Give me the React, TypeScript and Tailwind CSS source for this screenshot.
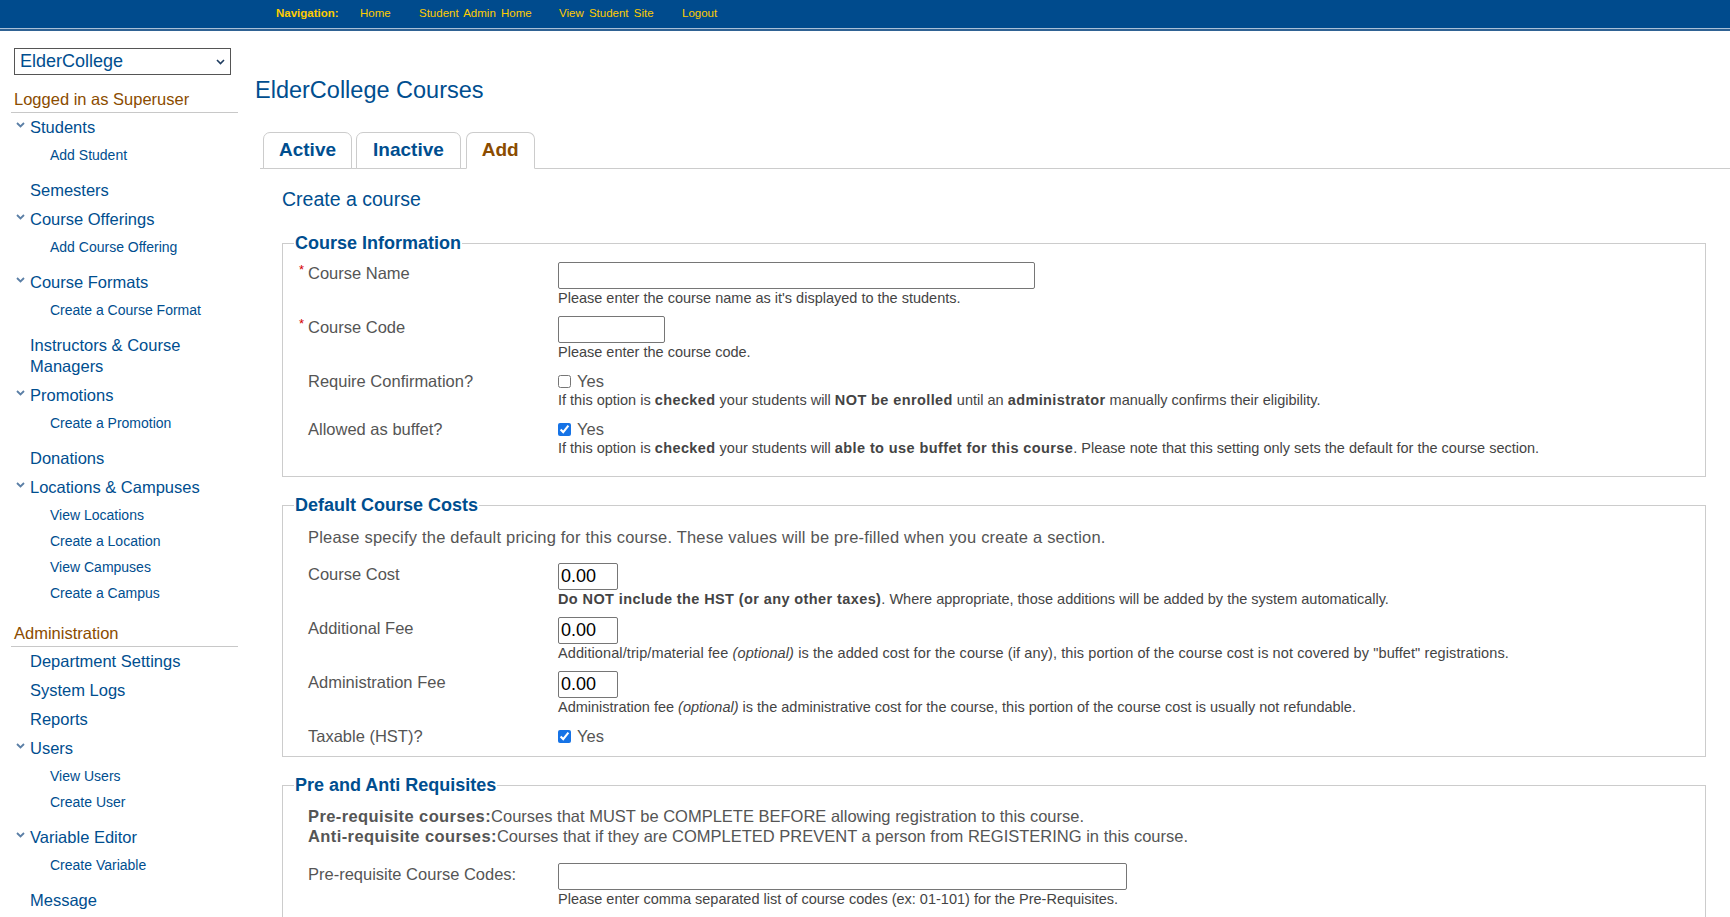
import React from "react";

const BLUE = "text-[#004e8f]";

const Chevron = () => (
  <svg width="9" height="6" viewBox="0 0 9 6" className="absolute left-[5px] top-[9px]">
    <polyline points="1,1 4.5,4.5 8,1" fill="none" stroke="#5b7fa6" strokeWidth="1.8" />
  </svg>
);

type NavItem = { label: string; lines?: string[]; children?: string[]; chevron?: boolean };

const mainNav: NavItem[] = [
  { label: "Students", chevron: true, children: ["Add Student"] },
  { label: "Semesters" },
  { label: "Course Offerings", chevron: true, children: ["Add Course Offering"] },
  { label: "Course Formats", chevron: true, children: ["Create a Course Format"] },
  { label: "Instructors & Course Managers", lines: ["Instructors & Course", "Managers"] },
  { label: "Promotions", chevron: true, children: ["Create a Promotion"] },
  { label: "Donations" },
  {
    label: "Locations & Campuses",
    chevron: true,
    children: ["View Locations", "Create a Location", "View Campuses", "Create a Campus"],
  },
];

const adminNav: NavItem[] = [
  { label: "Department Settings" },
  { label: "System Logs" },
  { label: "Reports" },
  { label: "Users", chevron: true, children: ["View Users", "Create User"] },
  { label: "Variable Editor", chevron: true, children: ["Create Variable"] },
  { label: "Message" },
];

function NavList({ items }: { items: NavItem[] }) {
  return (
    <ul>
      {items.map((item, i) => {
        const prev = items[i - 1];
        const gap = prev && prev.children ? "mt-[8px]" : "";
        return (
          <li key={item.label} className={gap}>
            <div className={`relative pl-[19px] py-[4px] text-[16.5px] leading-[21px] ${BLUE}`}>
              {item.chevron && <Chevron />}
              {item.lines ? item.lines.map((l) => <div key={l}>{l}</div>) : item.label}
            </div>
            {item.children && (
              <ul>
                {item.children.map((c) => (
                  <li key={c} className={`pl-[39px] h-[26px] flex items-center text-[14px] ${BLUE}`}>
                    {c}
                  </li>
                ))}
              </ul>
            )}
          </li>
        );
      })}
    </ul>
  );
}

function Sidebar() {
  return (
    <aside className="w-[238px] shrink-0 pl-[11px] pt-[17px]">
      <div className="relative ml-[3px] w-[217px] h-[27px] border border-[#555] flex items-center pl-[5px]">
        <span className={`text-[18px] ${BLUE}`}>ElderCollege</span>
        <svg width="9" height="6" viewBox="0 0 9 6" className="absolute right-[5px] top-[10px]">
          <polyline points="1,1 4.5,4.5 8,1" fill="none" stroke="#1f3d60" strokeWidth="1.6" />
        </svg>
      </div>
      <div className="mt-[13px] pl-[3px] pb-[2px] border-b border-[#c8c8c8] text-[16.5px] leading-[22px] text-[#8b4c00]">
        Logged in as Superuser
      </div>
      <NavList items={mainNav} />
      <div className="mt-[16px] pl-[3px] pb-[2px] border-b border-[#c8c8c8] text-[16.5px] leading-[22px] text-[#8b4c00]">
        Administration
      </div>
      <NavList items={adminNav} />
    </aside>
  );
}

function Field({
  label,
  required,
  children,
}: {
  label: string;
  required?: boolean;
  children: React.ReactNode;
}) {
  return (
    <>
      <div className="relative pt-[1px] text-[16.5px] leading-[20px] text-[#555]">
        {required && (
          <span className="absolute -left-[9px] -top-[2px] text-[13px] text-[#d40000]">*</span>
        )}
        {label}
      </div>
      <div>{children}</div>
    </>
  );
}

const Help = ({ children }: { children: React.ReactNode }) => (
  <div className="text-[14.5px] leading-[18px] text-[#444] [&_b]:tracking-[0.4px]">{children}</div>
);

const TextBox = ({ w, value }: { w: string; value?: string }) => (
  <input
    type="text"
    defaultValue={value}
    className={`${w} h-[27px] border border-[#767676] rounded-[2px] px-[2px] text-[18px] text-black outline-none block`}
  />
);

const Check = ({ checked }: { checked?: boolean }) => (
  <label className="flex items-center h-[20px] mt-[1px] text-[16.5px] text-[#555]">
    <input
      type="checkbox"
      defaultChecked={checked}
      className="w-[13px] h-[13px] m-0 accent-[#1673e6]"
    />
    <span className="ml-[6px]">Yes</span>
  </label>
);

function Box({ legend, children }: { legend: string; children: React.ReactNode }) {
  return (
    <fieldset className="border border-[#cccccc] px-[11px]">
      <legend className={`px-[1px] text-[18px] leading-[22px] font-bold ${BLUE}`}>{legend}</legend>
      <div className="pl-[14px]">{children}</div>
    </fieldset>
  );
}

function MainPanel() {
  return (
    <main className="flex-1 pl-[17px] pt-[43px]">
      <h1 className={`text-[23.5px] leading-[32px] ${BLUE}`}>ElderCollege Courses</h1>
      <div className="ml-[5px] mt-[26px] flex items-end border-b border-[#cccccc] pl-[3px] gap-[4px]">
        <div className={`-mb-px h-[37px] px-[15px] flex items-center border border-[#cccccc] rounded-t-[7px] bg-white text-[19px] font-bold ${BLUE}`}>
          Active
        </div>
        <div className={`-mb-px h-[37px] px-[16px] flex items-center border border-[#cccccc] rounded-t-[7px] bg-white text-[19px] font-bold ${BLUE}`}>
          Inactive
        </div>
        <div className="ml-[1px] -mb-px h-[37px] px-[15px] flex items-center border border-[#cccccc] border-b-white rounded-t-[7px] bg-white text-[19px] font-bold text-[#8b4c00]">
          Add
        </div>
      </div>
      <div className="ml-[5px] pl-[22px] pr-[24px]">
        <h2 className={`mt-[17px] text-[19.5px] leading-[26px] ${BLUE}`}>Create a course</h2>
        <div className="mt-[20px]">
          <Box legend="Course Information">
            <div className="grid grid-cols-[250px_1fr] gap-y-[9px] pt-[8px] pb-[19px]">
              <Field label="Course Name" required>
                <TextBox w="w-[477px]" />
                <Help>Please enter the course name as it's displayed to the students.</Help>
              </Field>
              <Field label="Course Code" required>
                <TextBox w="w-[107px]" />
                <Help>Please enter the course code.</Help>
              </Field>
              <Field label="Require Confirmation?">
                <Check />
                <Help>
                  If this option is <b>checked</b> your students will <b>NOT be enrolled</b> until an{" "}
                  <b>administrator</b> manually confirms their eligibility.
                </Help>
              </Field>
              <Field label="Allowed as buffet?">
                <Check checked />
                <Help>
                  If this option is <b>checked</b> your students will <b>able to use buffet for this course</b>.
                  Please note that this setting only sets the default for the course section.
                </Help>
              </Field>
            </div>
          </Box>
        </div>
        <div className="mt-[17px]">
          <Box legend="Default Course Costs">
            <p className="pt-[11px] text-[16.5px] leading-[20px] text-[#555] tracking-[0.2px]">
              Please specify the default pricing for this course. These values will be pre-filled when you
              create a section.
            </p>
            <div className="grid grid-cols-[250px_1fr] gap-y-[9px] mt-[16px] pb-[10px]">
              <Field label="Course Cost">
                <TextBox w="w-[60px]" value="0.00" />
                <Help>
                  <b>Do NOT include the HST (or any other taxes)</b>. Where appropriate, those additions will be
                  added by the system automatically.
                </Help>
              </Field>
              <Field label="Additional Fee">
                <TextBox w="w-[60px]" value="0.00" />
                <Help>
                  <span className="tracking-[0.1px]">
                    Additional/trip/material fee <i>(optional)</i> is the added cost for the course (if any), this
                    portion of the course cost is not covered by "buffet" registrations.
                  </span>
                </Help>
              </Field>
              <Field label="Administration Fee">
                <TextBox w="w-[60px]" value="0.00" />
                <Help>
                  Administration fee <i>(optional)</i> is the administrative cost for the course, this portion
                  of the course cost is usually not refundable.
                </Help>
              </Field>
              <Field label="Taxable (HST)?">
                <Check checked />
              </Field>
            </div>
          </Box>
        </div>
        <div className="mt-[17px]">
          <Box legend="Pre and Anti Requisites">
            <div className="pt-[10px] text-[16.5px] leading-[20px] text-[#555] [&_b]:tracking-[0.4px]">
              <div>
                <b>Pre-requisite courses:</b>Courses that MUST be COMPLETE BEFORE allowing registration to this
                course.
              </div>
              <div>
                <b>Anti-requisite courses:</b>Courses that if they are COMPLETED PREVENT a person from
                REGISTERING in this course.
              </div>
            </div>
            <div className="grid grid-cols-[250px_1fr] mt-[17px] pb-[20px]">
              <Field label="Pre-requisite Course Codes:">
                <TextBox w="w-[569px]" />
                <Help>Please enter comma separated list of course codes (ex: 01-101) for the Pre-Requisites.</Help>
              </Field>
            </div>
          </Box>
        </div>
      </div>
    </main>
  );
}

export default function App() {
  return (
    <div className="min-h-screen bg-white font-['Liberation_Sans',Arial,sans-serif]">
      <header>
        <div className="h-[28px] bg-[#004b8d] flex items-center pl-[276px] text-[11.5px] text-[#ffcc00] [word-spacing:2px] whitespace-nowrap">
          <span className="w-[84px] font-bold [word-spacing:0]">Navigation:</span>
          <span className="w-[59px]">Home</span>
          <span className="w-[140px]">Student Admin Home</span>
          <span className="w-[123px]">View Student Site</span>
          <span>Logout</span>
        </div>
        <div className="h-px bg-[#a9c0d8]" />
        <div className="h-[2px] bg-[#2f6293]" />
      </header>
      <div className="flex">
        <Sidebar />
        <MainPanel />
      </div>
    </div>
  );
}
